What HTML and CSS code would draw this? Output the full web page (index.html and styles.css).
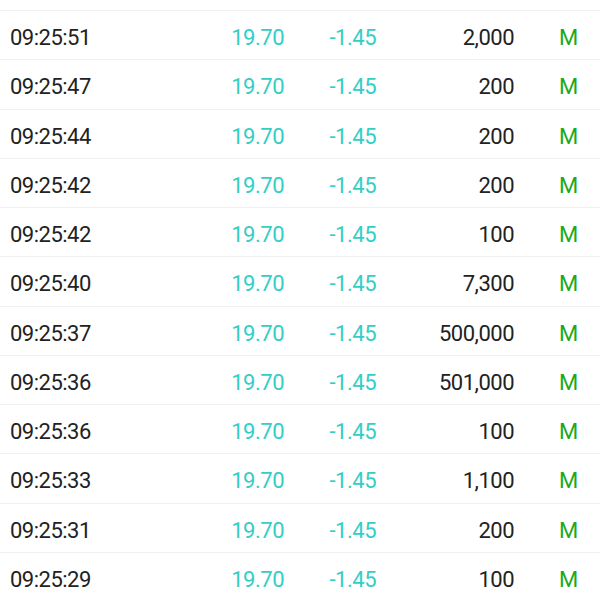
FILE: index.html
```html
<!DOCTYPE html>
<html>
<head>
<meta charset="utf-8">
<link rel="stylesheet" href="styles.css">
</head>
<body>
<div class="list">
  <div class="row"><span class="time">09:25:51</span><span class="price">19.70</span><span class="chg">-1.45</span><span class="vol">2,000</span><span class="flag">M</span></div>
  <div class="row"><span class="time">09:25:47</span><span class="price">19.70</span><span class="chg">-1.45</span><span class="vol">200</span><span class="flag">M</span></div>
  <div class="row"><span class="time">09:25:44</span><span class="price">19.70</span><span class="chg">-1.45</span><span class="vol">200</span><span class="flag">M</span></div>
  <div class="row"><span class="time">09:25:42</span><span class="price">19.70</span><span class="chg">-1.45</span><span class="vol">200</span><span class="flag">M</span></div>
  <div class="row"><span class="time">09:25:42</span><span class="price">19.70</span><span class="chg">-1.45</span><span class="vol">100</span><span class="flag">M</span></div>
  <div class="row"><span class="time">09:25:40</span><span class="price">19.70</span><span class="chg">-1.45</span><span class="vol">7,300</span><span class="flag">M</span></div>
  <div class="row"><span class="time">09:25:37</span><span class="price">19.70</span><span class="chg">-1.45</span><span class="vol">500,000</span><span class="flag">M</span></div>
  <div class="row"><span class="time">09:25:36</span><span class="price">19.70</span><span class="chg">-1.45</span><span class="vol">501,000</span><span class="flag">M</span></div>
  <div class="row"><span class="time">09:25:36</span><span class="price">19.70</span><span class="chg">-1.45</span><span class="vol">100</span><span class="flag">M</span></div>
  <div class="row"><span class="time">09:25:33</span><span class="price">19.70</span><span class="chg">-1.45</span><span class="vol">1,100</span><span class="flag">M</span></div>
  <div class="row"><span class="time">09:25:31</span><span class="price">19.70</span><span class="chg">-1.45</span><span class="vol">200</span><span class="flag">M</span></div>
  <div class="row"><span class="time">09:25:29</span><span class="price">19.70</span><span class="chg">-1.45</span><span class="vol">100</span><span class="flag">M</span></div>
</div>
</body>
</html>
```
FILE: styles.css
```css
html, body {
  margin: 0;
  padding: 0;
  background: #ffffff;
  overflow: hidden;
}
.list {
  padding-top: 10px;
  font-family: Roboto, "Liberation Sans", sans-serif;
  font-size: 22px;
  letter-spacing: -0.5px;
}
.row {
  display: grid;
  grid-template-columns: 200px 84px 92px 138px 86px;
  height: 45.27px;
  padding-top: 3px;
  border-top: 1px solid #f0f0f0;
  line-height: 48.27px;
}
.time {
  padding-left: 10px;
  color: #222222;
}
.price {
  text-align: right;
  color: #33cec6;
}
.chg {
  text-align: right;
  color: #33cec6;
}
.vol {
  text-align: right;
  color: #222222;
}
.flag {
  padding-left: 45px;
  color: #1aaa1a;
}
```
